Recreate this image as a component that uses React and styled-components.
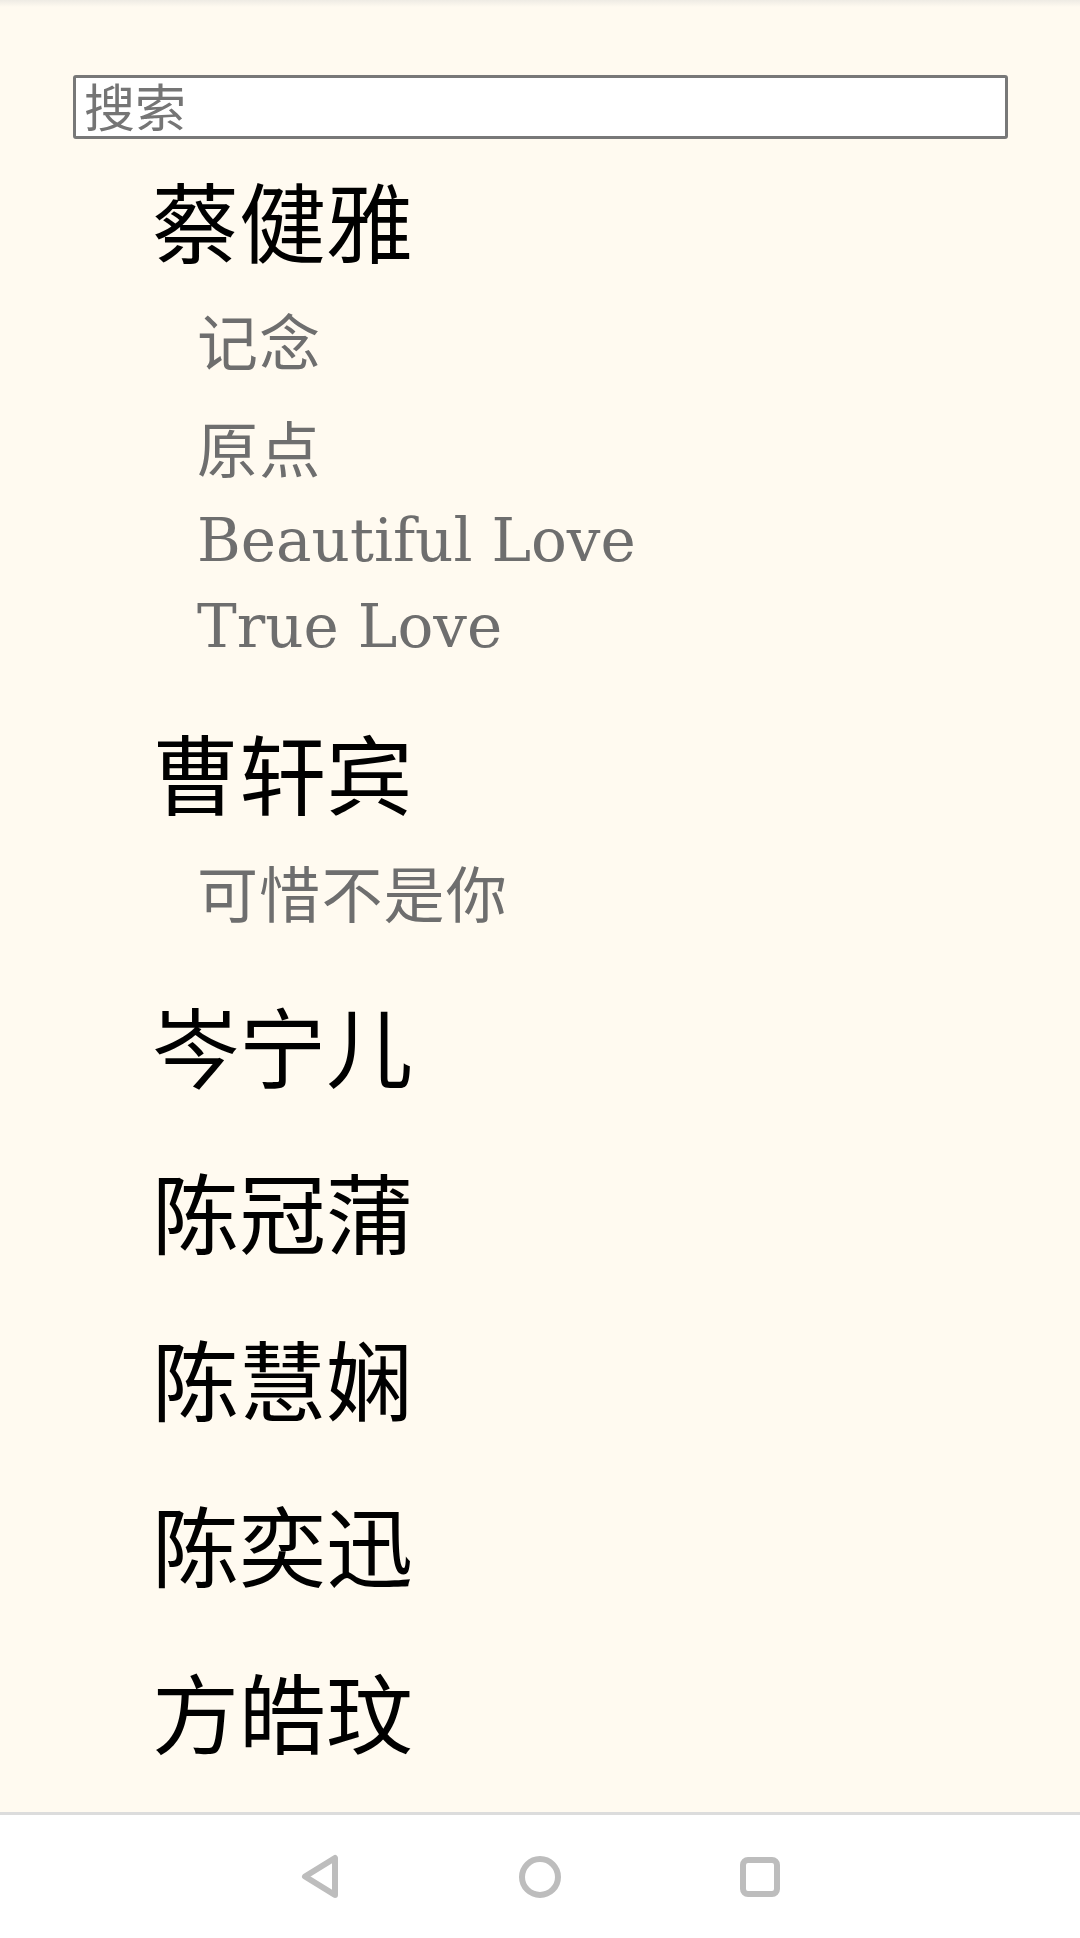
import React from "react";
import styled, { createGlobalStyle } from "styled-components";

const GlobalStyle = createGlobalStyle`
  html, body {
    margin: 0;
    padding: 0;
    background: #fffaf0;
  }
  * { box-sizing: border-box; }
`;

const Page = styled.div`
  width: 1080px;
  height: 1938px;
  display: flex;
  flex-direction: column;
  overflow: hidden;
`;

const Main = styled.main`
  flex: 1;
  min-height: 0;
  overflow: hidden;
  padding: 75px 72px 0 73px;
  background: linear-gradient(to bottom, #eeebe4 0px, #fffaf0 7px) top / 100% 7px no-repeat, #fffaf0;
`;

const SearchInput = styled.input`
  display: block;
  width: 100%;
  height: 64px;
  margin: 0;
  padding: 0 8px 4px;
  border: 3px solid #787878;
  border-radius: 3px;
  background: #ffffff;
  font-family: "Noto Sans CJK SC", "Noto Sans", sans-serif;
  font-size: 51px;
  color: #222;
  outline: none;
  &::placeholder {
    color: #757575;
  }
`;

const ArtistList = styled.ul`
  list-style: none;
  margin: 0;
  padding: 0 0 0 79px;
`;

const ArtistItem = styled.li`
  padding: 18px 0 20.5px;
`;

const ArtistName = styled.div`
  font-family: "Noto Sans CJK SC", sans-serif;
  font-size: 87px;
  line-height: 124px;
  color: #000;
  white-space: nowrap;
`;

const SongList = styled.ul`
  list-style: none;
  margin: 0;
  padding: 4px 0 0 45px;
`;

const Song = styled.li`
  font-family: "DejaVu Serif", "Noto Sans CJK SC", serif;
  font-size: ${(p) => (p.$cjk ? "61px" : "59.6px")};
  letter-spacing: ${(p) => (p.$cjk ? "1.2px" : "0")};
  line-height: 86px;
  color: #6e6e6e;
  white-space: nowrap;
  padding: ${(p) => (p.$cjk ? "17px 0 3.5px" : "0")};
`;

const NavBar = styled.nav`
  flex: 0 0 126px;
  border-top: 3px solid #dcdcdc;
  background: #ffffff;
  display: flex;
  align-items: center;
  justify-content: center;
  gap: 160px;
`;

const NavButton = styled.button`
  width: 60px;
  height: 60px;
  padding: 0;
  border: none;
  background: transparent;
  display: flex;
  align-items: center;
  justify-content: center;
  color: #bdbdbd;
`;

const BackIcon = () => (
  <svg width="40" height="45" viewBox="0 0 40 45" fill="none">
    <path
      d="M35 4 L35 41 L5 22.5 Z"
      stroke="currentColor"
      strokeWidth="6"
      strokeLinejoin="round"
    />
  </svg>
);

const HomeIcon = () => (
  <svg width="44" height="44" viewBox="0 0 44 44" fill="none">
    <circle cx="22" cy="22" r="18" stroke="currentColor" strokeWidth="6" />
  </svg>
);

const RecentsIcon = () => (
  <svg width="42" height="42" viewBox="0 0 42 42" fill="none">
    <rect x="4" y="4" width="34" height="34" rx="5" stroke="currentColor" strokeWidth="6" />
  </svg>
);

const artists = [
  { name: "蔡健雅", songs: ["记念", "原点", "Beautiful Love", "True Love"] },
  { name: "曹轩宾", songs: ["可惜不是你"] },
  { name: "岑宁儿", songs: [] },
  { name: "陈冠蒲", songs: [] },
  { name: "陈慧娴", songs: [] },
  { name: "陈奕迅", songs: [] },
  { name: "方皓玟", songs: [] },
];

const isCJK = (s) => /[\u3400-\u9fff]/.test(s);

export default function App() {
  return (
    <>
      <GlobalStyle />
      <Page>
        <Main>
          <SearchInput type="text" placeholder="搜索" />
          <ArtistList>
            {artists.map((a) => (
              <ArtistItem key={a.name}>
                <ArtistName>{a.name}</ArtistName>
                <SongList>
                  {a.songs.map((s) => (
                    <Song key={s} $cjk={isCJK(s)}>
                      {s}
                    </Song>
                  ))}
                </SongList>
              </ArtistItem>
            ))}
          </ArtistList>
        </Main>
        <NavBar>
          <NavButton aria-label="Back">
            <BackIcon />
          </NavButton>
          <NavButton aria-label="Home">
            <HomeIcon />
          </NavButton>
          <NavButton aria-label="Recents">
            <RecentsIcon />
          </NavButton>
        </NavBar>
      </Page>
    </>
  );
}
